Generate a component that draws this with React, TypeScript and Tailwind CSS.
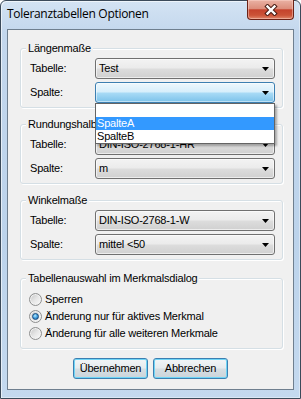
import React from "react";

const ui = "font-['Liberation_Sans',Arial,sans-serif] text-[11px] tracking-[-0.2px] text-black";

function Arrow() {
  return (
    <svg width="7" height="4" viewBox="0 0 7 4" className="block shrink-0">
      <path d="M0 0H7L3.5 4Z" fill="#000" />
    </svg>
  );
}

function Combo({ value, open, children }: { value: string; open?: boolean; children?: React.ReactNode }) {
  return (
    <div className="relative">
      <div
        className={`flex h-[21px] w-[180px] items-center justify-between rounded-[3px] border pl-[3px] pr-[5px] ${
          open
            ? "border-[#3c7fb1] bg-[linear-gradient(180deg,#eef8fd_0%,#d6eefb_48%,#a9dbf6_52%,#7cc2ea_100%)] shadow-[inset_0_0_0_1px_rgba(255,255,255,0.5)]"
            : "border-[#707070] bg-[linear-gradient(180deg,#f3f3f3_0%,#ebebeb_48%,#dddddd_52%,#d0d0d0_100%)] shadow-[inset_0_0_0_1px_rgba(255,255,255,0.6)]"
        }`}
      >
        <span className="leading-[13px] whitespace-nowrap">{value}</span>
        <Arrow />
      </div>
      {children}
    </div>
  );
}

function Row({ label, children }: { label: string; children: React.ReactNode }) {
  return (
    <div className="flex items-center">
      <span className="w-[65px] leading-[13px]">{label}</span>
      {children}
    </div>
  );
}

function Group({ title, className, children }: { title: string; className?: string; children: React.ReactNode }) {
  return (
    <div
      className={`relative ml-[12px] w-[263px] rounded-[3px] border border-[#d5dfe5] shadow-[inset_1px_1px_0_#ffffff,1px_1px_0_#ffffff] ${className ?? ""}`}
    >
      <span className="absolute -top-[7px] left-[5px] bg-[#f0f0f0] px-[2px] leading-[13px] whitespace-nowrap">{title}</span>
      {children}
    </div>
  );
}

function Radio({ checked }: { checked?: boolean }) {
  return (
    <span className="flex h-[13px] w-[13px] shrink-0 items-center justify-center rounded-full border border-[#8e8f8f] bg-[linear-gradient(135deg,#c4c4c4_0%,#e6e6e6_50%,#fbfbfb_100%)] shadow-[inset_0_0_0_1px_#f2f2f2]">
      {checked && (
        <span className="h-[7px] w-[7px] rounded-full border border-[#174a7c] bg-[radial-gradient(circle_at_40%_35%,#b9ecfe_0%,#4aa6e4_45%,#1b5d9e_100%)]" />
      )}
    </span>
  );
}

function RadioRow({ label, checked }: { label: string; checked?: boolean }) {
  return (
    <div className="flex h-[17px] items-center gap-[3px]">
      <Radio checked={checked} />
      <span className="leading-[13px] whitespace-nowrap">{label}</span>
    </div>
  );
}

function Button({ label }: { label: string }) {
  return (
    <div className="flex h-[21px] w-[75px] items-center justify-center rounded-[3px] border border-[#3c7fb1] bg-[linear-gradient(180deg,#f2f5f7_0%,#e6ebee_48%,#d6dee3_52%,#cbd4da_100%)] shadow-[inset_0_0_0_1px_#6fd5f6]">
      <span className="leading-[13px]">{label}</span>
    </div>
  );
}

function CloseButton() {
  return (
    <div className="-mt-[1px] flex h-[20px] w-[47px] items-center justify-center rounded-b-[4px] border border-t-0 border-[#6b2216] bg-[linear-gradient(180deg,#eab2a4_0%,#dc8e7c_45%,#c5432c_52%,#cb5337_80%,#e0876a_100%)] shadow-[inset_0_0_0_1px_rgba(255,220,210,0.45)]">
      <svg width="14" height="12" viewBox="0 0 14 12">
        <path d="M3.5 2.5L10.5 9.5M10.5 2.5L3.5 9.5" stroke="#4a1d14" strokeWidth="4.4" strokeLinecap="square" fill="none" />
        <path d="M3.5 2.5L10.5 9.5M10.5 2.5L3.5 9.5" stroke="#ffffff" strokeWidth="2.4" strokeLinecap="square" fill="none" />
      </svg>
    </div>
  );
}

export default function App() {
  return (
    <div className="h-[399px] w-[301px] bg-white">
      <div className="flex h-[399px] w-[301px] flex-col rounded-t-[6px] border border-[#3b4a5a] bg-[linear-gradient(180deg,#d3e3f3_0%,#c3d7ed_8%,#bcd3eb_60%,#c4d9ef_100%)] shadow-[inset_1px_1px_0_rgba(255,255,255,0.6),inset_-1px_-1px_0_rgba(255,255,255,0.4)]">
        <div className="flex h-[28px] shrink-0 justify-between pl-[6px] pr-[6px]">
          <span className="pt-[5px] font-['Open_Sans','Noto_Sans',sans-serif] text-[12px] leading-[16px] tracking-[-0.3px] text-black">
            Toleranztabellen Optionen
          </span>
          <CloseButton />
        </div>
        <div className={`mx-[6px] flex h-[361px] shrink-0 flex-col border border-[#6f7f8f] bg-[#f0f0f0] pb-[10px] ${ui}`}>
          <Group title="Längenmaße" className="mt-[18px] z-10">
            <div className="flex flex-col gap-[3px] pb-[4px] pl-[9px] pt-[9px]">
              <Row label="Tabelle:">
                <Combo value="Test" />
              </Row>
              <Row label="Spalte:">
                <Combo value="" open>
                  <div className="absolute left-0 top-[21px] z-20 h-[41px] w-[180px] border border-[#646464] bg-white shadow-[2px_2px_2px_rgba(0,0,0,0.3)]">
                    <div className="h-[13px]" />
                    <div className="h-[13px] bg-[#3399ff] pl-[1px] leading-[13px] text-white">SpalteA</div>
                    <div className="h-[13px] pl-[1px] leading-[13px]">SpalteB</div>
                  </div>
                </Combo>
              </Row>
            </div>
          </Group>
          <Group title="Rundungshalbmesser" className="mt-[16px]">
            <div className="flex flex-col gap-[3px] pb-[4px] pl-[9px] pt-[9px]">
              <Row label="Tabelle:">
                <Combo value="DIN-ISO-2768-1-HR" />
              </Row>
              <Row label="Spalte:">
                <Combo value="m" />
              </Row>
            </div>
          </Group>
          <Group title="Winkelmaße" className="mt-[16px]">
            <div className="flex flex-col gap-[3px] pb-[4px] pl-[9px] pt-[9px]">
              <Row label="Tabelle:">
                <Combo value="DIN-ISO-2768-1-W" />
              </Row>
              <Row label="Spalte:">
                <Combo value="mittel <50" />
              </Row>
            </div>
          </Group>
          <Group title="Tabellenauswahl im Merkmalsdialog" className="mt-[18px]">
            <div className="flex flex-col pb-[6px] pl-[8px] pt-[12px]">
              <RadioRow label="Sperren" />
              <RadioRow label="Änderung nur für aktives Merkmal" checked />
              <RadioRow label="Änderung für alle weiteren Merkmale" />
            </div>
          </Group>
          <div className="mt-[9px] flex justify-center gap-[5px]">
            <Button label="Übernehmen" />
            <Button label="Abbrechen" />
          </div>
        </div>
      </div>
    </div>
  );
}
